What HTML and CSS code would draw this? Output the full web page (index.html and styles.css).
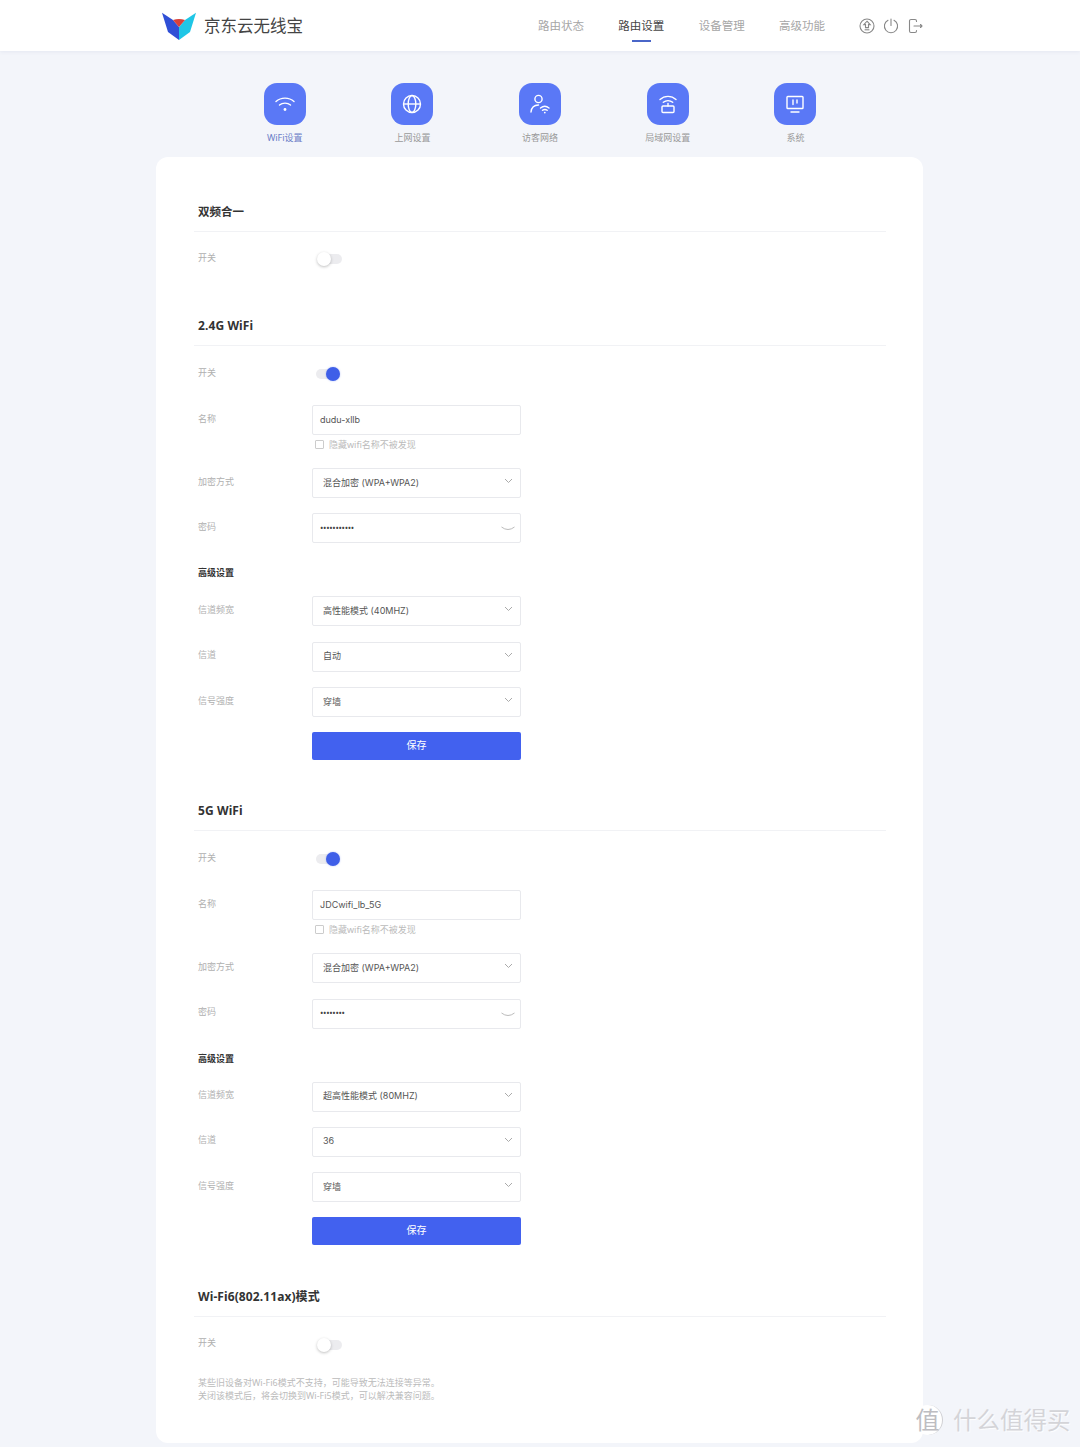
FILE: index.html
```html
<!DOCTYPE html>
<html lang="zh-CN">
<head>
  <meta charset="UTF-8">
  <title>京东云无线宝</title>
  <link rel="stylesheet" href="styles.css">
</head>
<body>

  <div class="header">
    <svg class="logo" width="34" height="30" viewBox="0 0 34 30">
      <path d="M0 .7 11 8 17 15V28L6 20Z" fill="#2f4fd6"/>
      <path d="M34 .7 23 8 17 15V28L28 20Z" fill="#1fc6e6"/>
      <path d="M11 8Q17 6 23 8L17 15Z" fill="#d8413a"/>
    </svg>
    <div class="brand">京东云无线宝</div>
    <div class="nav">
      <div class="nav-item">路由状态</div>
      <div class="nav-item active">路由设置</div>
      <div class="nav-item">设备管理</div>
      <div class="nav-item">高级功能</div>
    </div>
    <div class="head-icons">
      <svg width="16" height="16" viewBox="0 0 16 16" fill="none" stroke="#888" stroke-width="1.1">
        <circle cx="8" cy="8" r="7"/>
        <path d="M8 3.2 11.2 6.6H9.5V9.6H6.5V6.6H4.8Z"/>
        <path d="M5.6 11.8H10.4"/>
      </svg>
      <svg width="16" height="16" viewBox="0 0 16 16" fill="none" stroke="#888" stroke-width="1.1" stroke-linecap="round">
        <path d="M5 2.2A6.6 6.6 0 1 0 11 2.2"/>
        <path d="M8 1V7.5"/>
      </svg>
      <svg width="16" height="16" viewBox="0 0 16 16" fill="none" stroke="#888" stroke-width="1.1" stroke-linecap="round" stroke-linejoin="round">
        <path d="M9.5 3.500V3A1.500 1.500 0 0 0 8 1.500H4A1.500 1.500 0 0 0 2.500 3V13A1.500 1.500 0 0 0 4 14.500H8A1.500 1.500 0 0 0 9.500 13V12.500"/>
        <path d="M7 8H15M13.500 6.500 15 8 13.500 9.500"/>
      </svg>
    </div>
  </div>

  <div class="tabs">
    <div class="tab active">
      <div class="tile">
        <svg width="24" height="24" viewBox="0 0 24 24" fill="none" stroke="#fff" stroke-width="1.4" stroke-linecap="round">
          <path d="M3 9.500C8 5 16 5 21 9.500"/>
          <path d="M6.500 13C9.500 10.500 14.500 10.500 17.500 13"/>
          <circle cx="12" cy="17.500" r="1.400" fill="#fff" stroke="none"/>
        </svg>
      </div>
      <div class="tab-label">WiFi设置</div>
    </div>
    <div class="tab">
      <div class="tile">
        <svg width="24" height="24" viewBox="0 0 24 24" fill="none" stroke="#fff" stroke-width="1.4">
          <circle cx="12" cy="12" r="8.500"/>
          <ellipse cx="12" cy="12" rx="3.800" ry="8.500"/>
          <path d="M3.500 12H20.500"/>
        </svg>
      </div>
      <div class="tab-label">上网设置</div>
    </div>
    <div class="tab">
      <div class="tile">
        <svg width="24" height="24" viewBox="0 0 24 24" fill="none" stroke="#fff" stroke-width="1.4" stroke-linecap="round">
          <circle cx="10.500" cy="7" r="3.600"/>
          <path d="M3 20C3.500 15.500 6.500 13 10.500 13"/>
          <path d="M12.500 16C15 14 18.500 14 21 16"/>
          <path d="M14.500 18.300C16 17.200 17.800 17.200 19.200 18.300"/>
          <circle cx="16.800" cy="20.600" r=".9" fill="#fff" stroke="none"/>
        </svg>
      </div>
      <div class="tab-label">访客网络</div>
    </div>
    <div class="tab">
      <div class="tile">
        <svg width="24" height="24" viewBox="0 0 24 24" fill="none" stroke="#fff" stroke-width="1.4" stroke-linecap="round">
          <path d="M4 7.500C8.500 3.300 15.500 3.300 20 7.500"/>
          <path d="M7.300 10.300C10 8.200 14 8.200 16.700 10.300"/>
          <path d="M12 11.500V14"/>
          <rect x="6" y="14" width="12" height="6.500" rx="1"/>
        </svg>
      </div>
      <div class="tab-label">局域网设置</div>
    </div>
    <div class="tab">
      <div class="tile">
        <svg width="24" height="24" viewBox="0 0 24 24" fill="none" stroke="#fff" stroke-width="1.4" stroke-linecap="round">
          <rect x="4" y="4.500" width="16" height="12" rx=".8"/>
          <path d="M10 8V12.500M14 8V11M8 20H16"/>
        </svg>
      </div>
      <div class="tab-label">系统</div>
    </div>
  </div>

  <div class="card">

    <div class="section first">
      <div class="section-head">双频合一</div>
      <div class="row switch-row">
        <div class="label">开关</div>
        <div class="toggle"></div>
      </div>
    </div>

    <div class="section">
      <div class="section-head">2.4G WiFi</div>
      <div class="row switch-row">
        <div class="label">开关</div>
        <div class="toggle on"></div>
      </div>
      <div class="row name-row">
        <div class="label">名称</div>
        <div class="field text">dudu-xllb</div>
      </div>
      <div class="hint"><span class="check"></span>隐藏wifi名称不被发现</div>
      <div class="row after-hint">
        <div class="label">加密方式</div>
        <div class="field select">混合加密 (WPA+WPA2)<svg class="chev" width="9" height="6" viewBox="0 0 9 6"><path d="M1 1 4.500 4.500 8 1" fill="none" stroke="#aaa"/></svg></div>
      </div>
      <div class="row">
        <div class="label">密码</div>
        <div class="field text dots">•••••••••••<svg class="eye" width="14" height="5" viewBox="0 0 14 5"><path d="M.5 1Q7 6 13.500 1" fill="none" stroke="#bbb"/></svg></div>
      </div>
      <div class="adv-title">高级设置</div>
      <div class="row after-adv">
        <div class="label">信道频宽</div>
        <div class="field select">高性能模式 (40MHZ)<svg class="chev" width="9" height="6" viewBox="0 0 9 6"><path d="M1 1 4.500 4.500 8 1" fill="none" stroke="#aaa"/></svg></div>
      </div>
      <div class="row">
        <div class="label">信道</div>
        <div class="field select">自动<svg class="chev" width="9" height="6" viewBox="0 0 9 6"><path d="M1 1 4.500 4.500 8 1" fill="none" stroke="#aaa"/></svg></div>
      </div>
      <div class="row">
        <div class="label">信号强度</div>
        <div class="field select">穿墙<svg class="chev" width="9" height="6" viewBox="0 0 9 6"><path d="M1 1 4.500 4.500 8 1" fill="none" stroke="#aaa"/></svg></div>
      </div>
      <div class="btn">保存</div>
    </div>

    <div class="section">
      <div class="section-head">5G WiFi</div>
      <div class="row switch-row">
        <div class="label">开关</div>
        <div class="toggle on"></div>
      </div>
      <div class="row name-row">
        <div class="label">名称</div>
        <div class="field text">JDCwifi_lb_5G</div>
      </div>
      <div class="hint"><span class="check"></span>隐藏wifi名称不被发现</div>
      <div class="row after-hint">
        <div class="label">加密方式</div>
        <div class="field select">混合加密 (WPA+WPA2)<svg class="chev" width="9" height="6" viewBox="0 0 9 6"><path d="M1 1 4.500 4.500 8 1" fill="none" stroke="#aaa"/></svg></div>
      </div>
      <div class="row">
        <div class="label">密码</div>
        <div class="field text dots">••••••••<svg class="eye" width="14" height="5" viewBox="0 0 14 5"><path d="M.5 1Q7 6 13.500 1" fill="none" stroke="#bbb"/></svg></div>
      </div>
      <div class="adv-title">高级设置</div>
      <div class="row after-adv">
        <div class="label">信道频宽</div>
        <div class="field select">超高性能模式 (80MHZ)<svg class="chev" width="9" height="6" viewBox="0 0 9 6"><path d="M1 1 4.500 4.500 8 1" fill="none" stroke="#aaa"/></svg></div>
      </div>
      <div class="row">
        <div class="label">信道</div>
        <div class="field select">36<svg class="chev" width="9" height="6" viewBox="0 0 9 6"><path d="M1 1 4.500 4.500 8 1" fill="none" stroke="#aaa"/></svg></div>
      </div>
      <div class="row">
        <div class="label">信号强度</div>
        <div class="field select">穿墙<svg class="chev" width="9" height="6" viewBox="0 0 9 6"><path d="M1 1 4.500 4.500 8 1" fill="none" stroke="#aaa"/></svg></div>
      </div>
      <div class="btn">保存</div>
    </div>

    <div class="section last">
      <div class="section-head">Wi-Fi6(802.11ax)模式</div>
      <div class="row switch-row">
        <div class="label">开关</div>
        <div class="toggle"></div>
      </div>
      <div class="note">
        某些旧设备对Wi-Fi6模式不支持，可能导致无法连接等异常。<br>
        关闭该模式后，将会切换到Wi-Fi5模式，可以解决兼容问题。
      </div>
    </div>

  </div>

  <!-- site watermark sits over the page corner -->
  <div class="watermark"><span class="wm-badge">值</span><span class="wm-text">什么值得买</span></div>

</body>
</html>
```

FILE: styles.css
```css
body {
  font-family: "Noto Sans", "Noto Sans CJK SC", sans-serif;
  background-color: #f3f5fa;
  margin: 0;
  padding: 0;
  width: 1080px;
  height: 1447px;
  overflow: hidden;
  position: relative;
}

.header {
  display: flex;
  align-items: center;
  height: 51px;
  padding: 0 157px 0 162px;
  background-color: #fff;
  box-shadow: 0 1px 4px rgba(60, 80, 140, 0.08);
}

.logo {
  margin-top: 2px;
}

.brand {
  margin: -2px 0 0 8px;
  font-size: 16.500px;
  color: #444;
}

.nav {
  display: flex;
  gap: 34.330px;
  margin-left: auto;
}

.nav-item {
  position: relative;
  font-size: 11.500px;
  line-height: 20px;
  color: #a6a6a6;
}

.nav-item.active {
  color: #444;
}

.nav-item.active::after {
  content: "";
  position: absolute;
  left: 14px;
  right: 13px;
  bottom: -6px;
  height: 2px;
  background-color: #4a66c8;
}

.head-icons {
  display: flex;
  gap: 8px;
  margin-left: 34px;
}

.tabs {
  display: flex;
  justify-content: center;
  padding: 32px 0 0 0.200px;
  height: 74px;
}

.tab {
  position: relative;
  display: flex;
  flex-direction: column;
  align-items: center;
  width: 127.700px;
}

.tile {
  display: flex;
  align-items: center;
  justify-content: center;
  width: 42px;
  height: 42px;
  border-radius: 13px;
  background-color: #5a78f6;
}

.tab-label {
  margin-top: 6px;
  font-size: 9px;
  line-height: 14px;
  color: #999;
}

.tab.active .tab-label {
  color: #6d7fc8;
}

.tab.active::after {
  content: "";
  position: absolute;
  bottom: -32px;
  left: 56px;
  border-left: 8px solid transparent;
  border-right: 8px solid transparent;
  border-bottom: 8px solid #fff;
}

.card {
  box-sizing: border-box;
  width: 767px;
  height: 1286px;
  margin-left: 156px;
  padding: 45px 37px 0 38px;
  background-color: #fff;
  border-radius: 12px;
}

.section {
  margin-bottom: 41px;
}

.section:nth-child(3) {
  margin-bottom: 41.500px;
}

.section.first {
  margin-bottom: 42px;
}

.section.last {
  margin-bottom: 0;
}

.section-head {
  box-sizing: border-box;
  height: 30px;
  padding-left: 4px;
  font-size: 12px;
  font-weight: 700;
  line-height: 20px;
  letter-spacing: 0.100px;
  color: #333;
  border-bottom: 1px solid #f1f2f5;
}

.first .section-head {
  font-size: 11.500px;
  letter-spacing: 0;
}

.row {
  display: flex;
  align-items: center;
  height: 30px;
  margin-top: 15.400px;
  padding-left: 4px;
}

.switch-row {
  margin-top: 13px;
}

.first .switch-row {
  margin-top: 12px;
}

.name-row {
  margin-top: 16px;
}

.after-hint {
  margin-top: 17px;
}

.after-adv {
  margin-top: 16px;
}

.label {
  width: 114px;
  font-size: 9px;
  color: #b0b0b0;
  margin-top: -4px;
}

.toggle {
  position: relative;
  width: 26px;
  height: 10px;
  margin-left: 4px;
  border-radius: 5px;
  background: linear-gradient(to right, transparent 6px, #ececef 6px);
}

.toggle::after {
  content: "";
  position: absolute;
  top: -2px;
  left: 1px;
  width: 14px;
  height: 14px;
  border-radius: 50%;
  background-color: #fff;
  box-shadow: 0 1px 3px rgba(0, 0, 0, 0.25);
}

.toggle.on {
  width: 20px;
  margin-right: 6px;
  background: #ececef;
}

.toggle.on::after {
  left: 10px;
  background-color: #3f5fe8;
  box-shadow: 0 0 2px rgba(63, 95, 232, 0.4);
}

.field {
  box-sizing: border-box;
  position: relative;
  display: flex;
  align-items: center;
  width: 209px;
  height: 30px;
  padding-bottom: 2px;
  background-color: #fff;
  border: 1px solid #e8e9ed;
  border-radius: 2px;
  font-family: Inter, "Noto Sans CJK SC", sans-serif;
  font-size: 9px;
  color: #555;
}

.field.text {
  padding-left: 7px;
}

.field.select {
  padding-left: 10px;
}

.field.dots {
  font-family: "Noto Sans", sans-serif;
  letter-spacing: -0.300px;
  color: #444;
}

.chev {
  position: absolute;
  right: 7px;
  top: 9px;
}

.eye {
  position: absolute;
  right: 5px;
  top: 12px;
}

.hint {
  display: flex;
  align-items: center;
  height: 14px;
  margin-top: 2px;
  padding-left: 121px;
  font-size: 9px;
  color: #bbb;
}

.check {
  box-sizing: border-box;
  width: 9px;
  height: 9px;
  margin-right: 5px;
  border: 1px solid #ccc;
  border-radius: 1px;
}

.adv-title {
  height: 14px;
  margin-top: 23px;
  padding-left: 4px;
  font-size: 9px;
  font-weight: 700;
  line-height: 14px;
  color: #333;
}

.btn {
  height: 28px;
  width: 209px;
  margin: 15px 0 0 118px;
  border-radius: 2px;
  background-color: #4261ef;
  color: #fff;
  font-size: 10px;
  line-height: 27px;
  text-align: center;
}

.note {
  margin-top: 16px;
  padding-left: 4px;
  font-size: 9px;
  line-height: 13px;
  color: #bbb;
}

.watermark {
  position: absolute;
  left: 913px;
  top: 1405px;
  display: flex;
  align-items: center;
  color: #d4d4d8;
}

.wm-badge {
  box-sizing: border-box;
  width: 30px;
  height: 30px;
  border-radius: 50%;
  background-color: #fff;
  border-right: 1px solid #cfcfd3;
  font-size: 24px;
  line-height: 29px;
  text-align: center;
  color: #bdbdc1;
}

.wm-text {
  margin-left: 10px;
  font-size: 23.500px;
  line-height: 30px;
  text-shadow: 1px 1px 1px rgba(255, 255, 255, 0.9);
}
```
